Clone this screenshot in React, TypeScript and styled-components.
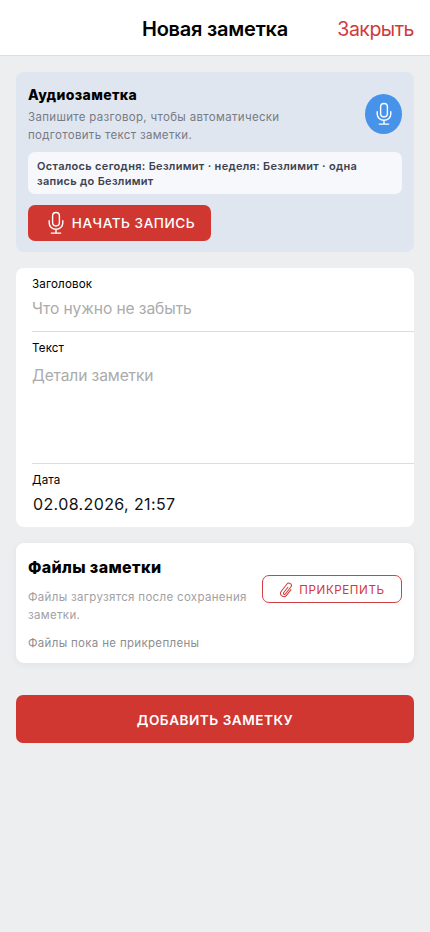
import React from 'react';
import styled, { createGlobalStyle } from 'styled-components';

const Global = createGlobalStyle`
  * { box-sizing: border-box; }
  body { margin: 0; background: #eceef0; font-family: Inter, "Liberation Sans", sans-serif; color: #000; }
  button, input, textarea { font-family: inherit; margin: 0; }
`;

const Page = styled.div`
  min-height: 932px;
  background: #eceef0;
`;

const Header = styled.header`
  height: 56px;
  display: grid;
  grid-template-columns: 1fr auto 1fr;
  align-items: center;
  padding: 3px 16px 0;
  background: #fff;
  border-bottom: 1px solid #dcdee0;
`;

const Title = styled.h1`
  grid-column: 2;
  margin: 0;
  font-size: 20px;
  line-height: 24px;
  font-weight: 600;
  letter-spacing: -0.22px;
`;

const CloseButton = styled.button`
  justify-self: end;
  padding: 0;
  border: 0;
  background: none;
  color: #d1383b;
  font-size: 19.5px;
  line-height: 24px;
  letter-spacing: -0.5px;
`;

const Content = styled.main`
  display: flex;
  flex-direction: column;
  gap: 16px;
  padding: 16px;
`;

const AudioCard = styled.section`
  height: 180px;
  padding: 12px;
  border-radius: 8px;
  background: #e0e6f0;
`;

const AudioTop = styled.div`
  height: 68px;
  display: flex;
  justify-content: space-between;
  align-items: flex-start;
`;

const CardTitle = styled.h2<{ $size: number }>`
  margin: 0;
  font-size: ${(p) => p.$size}px;
  line-height: 22px;
  font-weight: 800;
  letter-spacing: 0.36px;
`;

const Description = styled.p<{ $color: string; $gap?: number }>`
  margin: ${(p) => p.$gap ?? 0}px 0 0;
  font-size: 11.5px;
  line-height: 18px;
  letter-spacing: 0.32px;
  white-space: nowrap;
  color: ${(p) => p.$color};
`;

const MicBadge = styled.div`
  width: 37px;
  height: 40px;
  margin-top: 10px;
  border-radius: 50%;
  background: #4793ea;
  display: grid;
  place-items: center;
  color: #fff;
`;

const Quota = styled.div`
  height: 42px;
  padding: 7px 9px;
  border-radius: 7px;
  background: #f6f8fc;
  color: #3d424e;
  font-size: 11px;
  line-height: 14.5px;
  font-weight: 600;
  letter-spacing: 0.31px;
`;

const RecordButton = styled.button`
  width: 183px;
  height: 36px;
  margin-top: 11px;
  padding: 0 0 1px;
  border: 0;
  border-radius: 7px;
  display: flex;
  align-items: center;
  justify-content: center;
  gap: 4px;
  background: #d13731;
  color: #fff;
  font-size: 13.6px;
  font-weight: 500;
  letter-spacing: 0.53px;
`;

const Form = styled.section`
  height: 259px;
  padding-left: 16px;
  border-radius: 8px;
  background: #fff;
`;

const Field = styled.label<{ $height: number; $last?: boolean }>`
  height: ${(p) => p.$height}px;
  display: flex;
  flex-direction: column;
  padding-top: 8px;
  border-bottom: ${(p) => (p.$last ? '0' : '1px solid #dcdcde')};
`;

const Label = styled.span`
  font-size: 11.6px;
  line-height: 16px;
  letter-spacing: 0.15px;
`;

const Input = styled.input<{ $indent?: number }>`
  width: 100%;
  height: 32px;
  padding: 0 0 0 ${(p) => p.$indent ?? 0}px;
  border: 0;
  outline: 0;
  background: none;
  font-size: ${(p) => (p.$indent ? '16px' : '15.6px')};
  letter-spacing: ${(p) => (p.$indent ? '0.38px' : '-0.1px')};
  color: #111;
  &::placeholder { color: #ababab; }
`;

const TextArea = styled.textarea`
  width: 100%;
  height: 96px;
  padding: 9px 0 0;
  border: 0;
  outline: 0;
  resize: none;
  background: none;
  font-size: 15.6px;
  line-height: 22px;
  letter-spacing: -0.13px;
  &::placeholder { color: #ababab; }
`;

const FilesCard = styled.section`
  height: 120px;
  padding: 13px 12px 0;
  border-radius: 8px;
  background: #fff;
  box-shadow: 0 2px 8px rgba(30, 40, 60, 0.05);
`;

const FilesTop = styled.div`
  display: flex;
  justify-content: space-between;
`;

const FilesText = styled.div`
  width: 228px;
`;

const AttachButton = styled.button`
  width: 140px;
  height: 28px;
  margin-top: 19px;
  padding: 1px 0 0;
  border: 1px solid #cf4145;
  border-radius: 7px;
  display: flex;
  align-items: center;
  justify-content: center;
  gap: 5px;
  background: none;
  color: #d1383b;
  font-size: 11.6px;
  letter-spacing: 0.6px;
`;

const SubmitButton = styled.button`
  height: 48px;
  margin-top: 16px;
  padding: 1px 0 0;
  border: 0;
  border-radius: 7px;
  background: #d13731;
  color: #fff;
  font-size: 13.6px;
  font-weight: 600;
  letter-spacing: 0.5px;
`;

const MicIcon = ({ size }: { size: number }) => (
  <svg width={size} height={size} viewBox="0 0 24 24" fill="none" stroke="currentColor" strokeWidth="1.4" strokeLinecap="round" strokeLinejoin="round">
    <rect x="8.6" y="1.5" width="6.8" height="13.5" rx="3.4" />
    <path d="M5.2 9.7v2.2a6.8 6.4 0 0 0 13.6 0V9.7M12 18.5v3.6M7.3 22.1h9.4" />
  </svg>
);

const ClipIcon = () => (
  <svg width="15" height="16" viewBox="-7.5 -8 15 16" fill="none" stroke="currentColor" strokeWidth="1" strokeLinecap="round" strokeLinejoin="round">
    <path transform="rotate(38)" d="M3.3-3V4.2a3.3 3.3 0 0 1-6.6 0V-5a2.45 2.45 0 0 1 4.9 0V3.9a1.1 1.1 0 0 1-2.2 0V-3" />
  </svg>
);

export default function App() {
  return (
    <Page>
      <Global />
      <Header>
        <Title>Новая заметка</Title>
        <CloseButton>Закрыть</CloseButton>
      </Header>
      <Content>
        <AudioCard>
          <AudioTop>
            <div>
              <CardTitle $size={14}>Аудиозаметка</CardTitle>
              <Description $color="#777b85" $gap={2}>
                Запишите разговор, чтобы автоматически<br />подготовить текст заметки.
              </Description>
            </div>
            <MicBadge><MicIcon size={24} /></MicBadge>
          </AudioTop>
          <Quota>
            Осталось сегодня: Безлимит · неделя: Безлимит · одна<br />запись до Безлимит
          </Quota>
          <RecordButton><MicIcon size={24} />НАЧАТЬ ЗАПИСЬ</RecordButton>
        </AudioCard>
        <Form>
          <Field $height={64}>
            <Label>Заголовок</Label>
            <Input placeholder="Что нужно не забыть" />
          </Field>
          <Field $height={132}>
            <Label>Текст</Label>
            <TextArea placeholder="Детали заметки" />
          </Field>
          <Field $height={63} $last>
            <Label>Дата</Label>
            <Input $indent={1} defaultValue="02.08.2026, 21:57" />
          </Field>
        </Form>
        <FilesCard>
          <FilesTop>
            <FilesText>
              <CardTitle $size={16}>Файлы заметки</CardTitle>
              <Description $color="#a1a1a3" $gap={10}>Файлы загрузятся после сохранения<br />заметки.</Description>
            </FilesText>
            <AttachButton><ClipIcon />ПРИКРЕПИТЬ</AttachButton>
          </FilesTop>
          <Description $color="#8e8e90" $gap={10}>Файлы пока не прикреплены</Description>
        </FilesCard>
        <SubmitButton>ДОБАВИТЬ ЗАМЕТКУ</SubmitButton>
      </Content>
    </Page>
  );
}
